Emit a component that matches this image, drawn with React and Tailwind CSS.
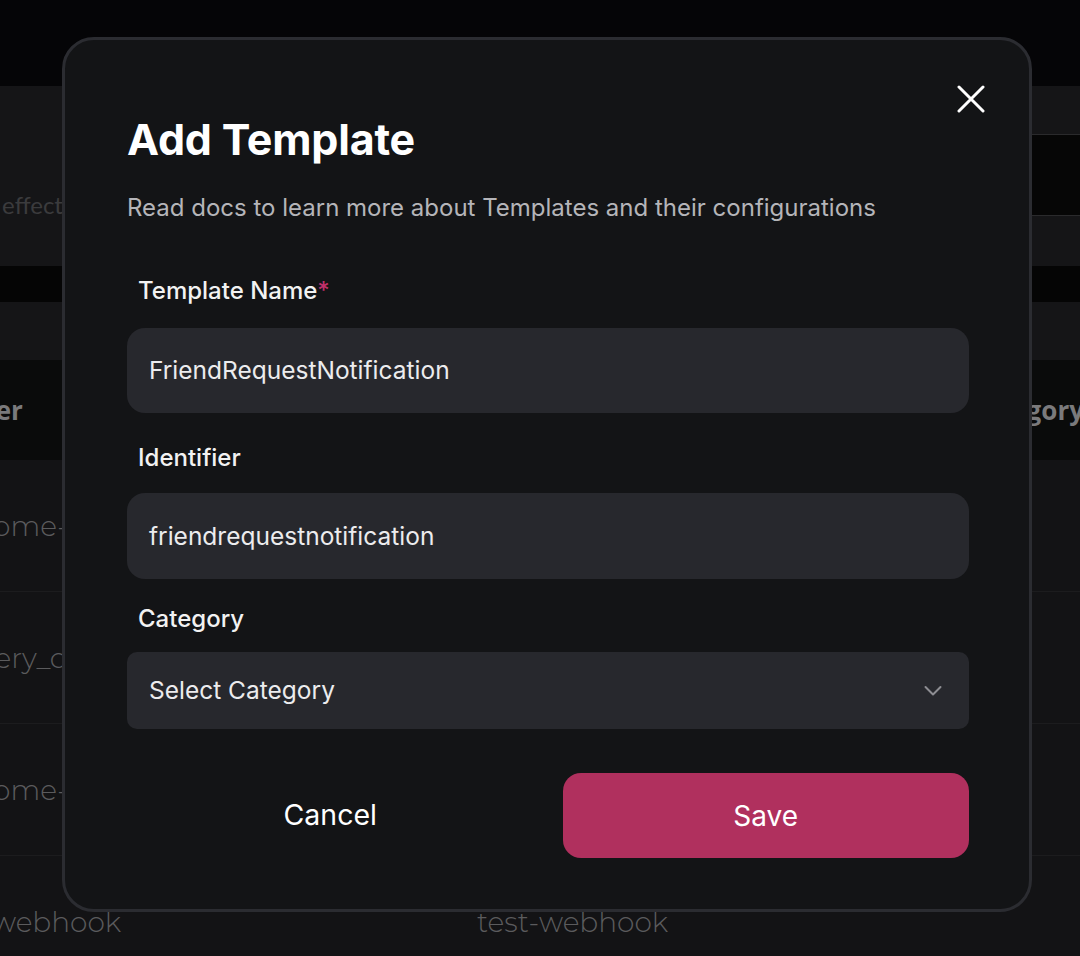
import React from "react";

const bgText = "font-['Montserrat','Lato',sans-serif] font-light text-[28px] text-[#5b5b5d]";

function Row({ a, b }) {
  return (
    <div className="h-[132px] border-b border-[#1c1c1e] flex items-center">
      <div className={`w-[547px] shrink-0 -ml-[70px] ${bgText}`}>{a}</div>
      <div className={bgText}>{b}</div>
    </div>
  );
}

function CloseIcon() {
  return (
    <svg width="28" height="28" viewBox="0 0 28 28" fill="none">
      <path d="M2 2L26 26M26 2L2 26" stroke="white" strokeWidth="3" strokeLinecap="round" />
    </svg>
  );
}

function Chevron() {
  return (
    <svg width="18" height="12" viewBox="0 0 18 12" fill="none">
      <path d="M1.5 2L9 9.5L16.5 2" stroke="#8d8d92" strokeWidth="2" strokeLinecap="round" strokeLinejoin="round" />
    </svg>
  );
}

export default function App() {
  return (
    <div className="relative w-[1080px] h-[956px] overflow-hidden bg-[#131315] font-['Inter',sans-serif]">
      {/* background page */}
      <div className="flex flex-col">
        <div className="h-[86px] bg-[#050507]" />
        <div className="h-[180px] bg-[#151517] flex items-start">
          <div className="mt-[101px] -ml-[145px] font-['Lato',sans-serif] text-[24px] text-[#3b3b3d]">Changes take effect</div>
          <div className="ml-auto mt-[48px] w-[400px] h-[82px] bg-[#060606] border-y border-[#2a2a2c]" />
        </div>
        <div className="h-[36px] bg-[#050505]" />
        <div className="h-[58px] bg-[#151517]" />
        <div className="h-[100px] bg-[#0a0b0b] flex items-center font-['Open_Sans',sans-serif] font-bold text-[26px] text-[#7a7a7c]">
          <div className="-ml-[99px]">Identifier</div>
          <div className="ml-auto -mr-[4px]">Category</div>
        </div>
        <Row a="welcome-email" b="welcome-email" />
        <Row a="delivery_confirmation" b="delivery_confirmation" />
        <Row a="welcome-sms" b="welcome-sms" />
        <Row a="test-webhook" b="test-webhook" />
      </div>

      {/* modal */}
      <div className="absolute left-[62px] top-[37px] w-[970px] h-[875px] rounded-[32px] border-[3px] border-[#2b2c31] bg-[#131416] pl-[62px] pr-[60px] pt-[73px]">
        <button className="absolute right-[44px] top-[45px]">
          <CloseIcon />
        </button>
        <h2 className="text-[43px] leading-[52px] font-bold text-white tracking-[-0.2px]">Add Template</h2>
        <p className="mt-[27px] text-[24px] leading-[32px] text-[#b5b5b9]">
          Read docs to learn more about Templates and their configurations
        </p>
        <div className="mt-[51px] flex flex-col">
          <label className="pl-[11px] text-[24px] leading-[32px] font-medium text-[#f2f2f2]">
            Template Name<span className="text-[#c0306a]">*</span>
          </label>
          <div className="mt-[21px] h-[85px] rounded-[18px] bg-[#27282d] flex items-center pl-[22px] text-[24.5px] text-[#ececee]">
            FriendRequestNotification
          </div>
          <label className="mt-[29px] pl-[11px] text-[24px] leading-[32px] font-medium text-[#f2f2f2]">
            Identifier
          </label>
          <div className="mt-[19px] h-[86px] rounded-[18px] bg-[#27282d] flex items-center pl-[22px] text-[24.5px] text-[#ececee]">
            friendrequestnotification
          </div>
          <label className="mt-[24px] pl-[11px] text-[24px] leading-[32px] font-medium text-[#f2f2f2]">
            Category
          </label>
          <div className="mt-[17px] h-[77px] rounded-[10px] bg-[#27282d] flex items-center justify-between pl-[22px] pr-[27px] text-[24.5px] text-[#ececee]">
            <span>Select Category</span>
            <Chevron />
          </div>
          <div className="mt-[44px] flex gap-[29px]">
            <button className="flex-1 h-[85px] rounded-[18px] text-[28.5px] text-white">Cancel</button>
            <button className="flex-1 h-[85px] rounded-[18px] bg-[#b0305e] text-[28px] text-white">Save</button>
          </div>
        </div>
      </div>
    </div>
  );
}
